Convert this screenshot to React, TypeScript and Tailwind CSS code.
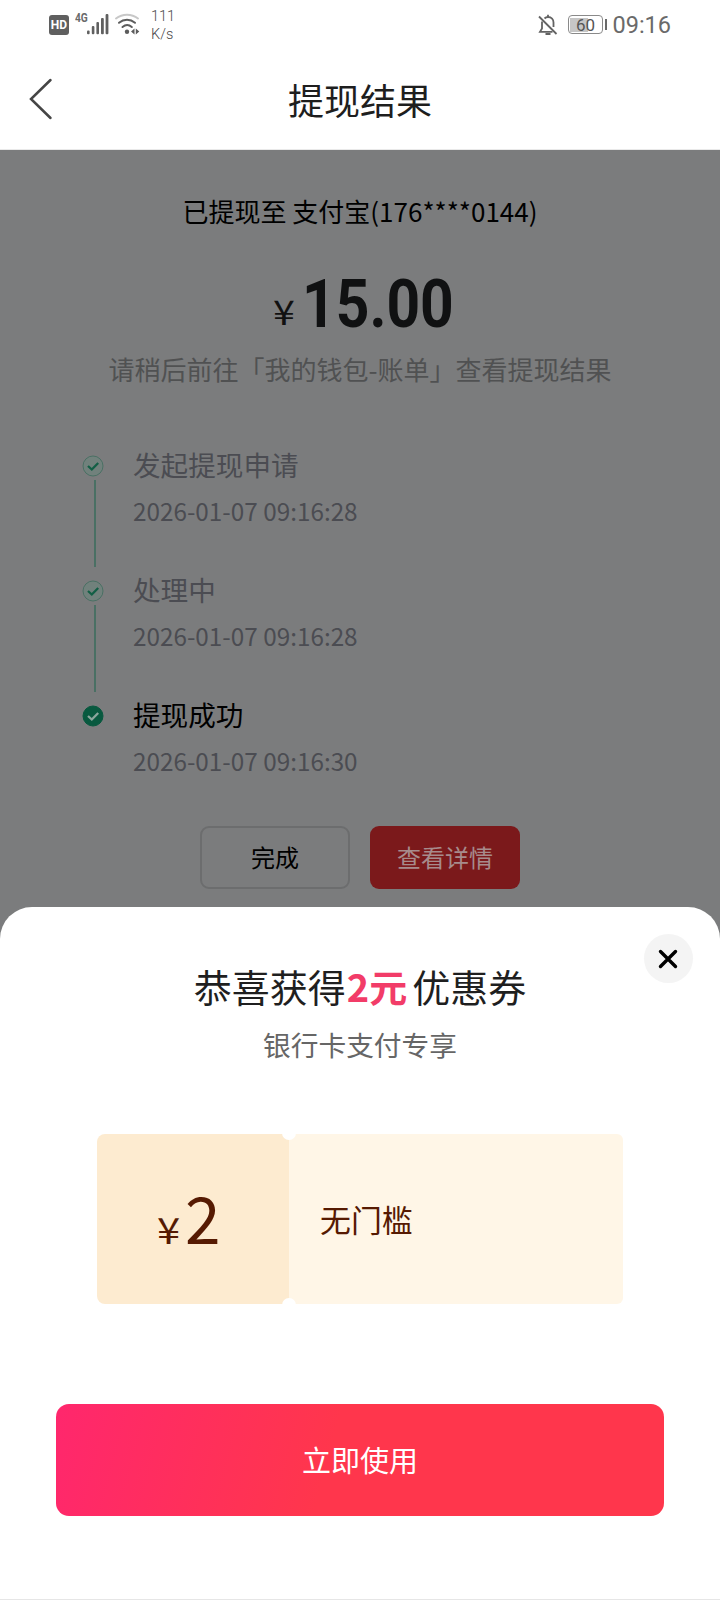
import React from 'react';

const steps = [
  { title: '发起提现申请', time: '2026-01-07 09:16:28', done: false },
  { title: '处理中', time: '2026-01-07 09:16:28', done: false },
  { title: '提现成功', time: '2026-01-07 09:16:30', done: true },
];

const StatusBar = () => (
  <div className="flex justify-between h-[50px] pl-[49px] pr-[49px] font-['Roboto',sans-serif] text-[#6a6a6a]">
    <div className="flex">
      <div className="mt-[15px] w-[20px] h-[20px] rounded-[3px] bg-[#5f5f5f] text-white text-[12px] leading-[20px] font-bold text-center">
        HD
      </div>
      <div className="ml-[6px] mt-[12px] w-[12px] origin-left scale-x-[0.850] text-[12px] leading-[13px] font-bold">4G</div>
      <svg className="mt-[13px]" width="22" height="22" viewBox="0 0 22 22" fill="#606060">
        <rect x="0" y="17.5" width="2.6" height="3.8" rx="1" />
        <rect x="4.8" y="13" width="2.6" height="8.3" rx="1" />
        <rect x="9.4" y="9" width="2.6" height="12.3" rx="1" />
        <rect x="14" y="5" width="2.8" height="16.3" rx="1" />
        <rect x="18.6" y="1" width="2.8" height="20.3" rx="1" />
      </svg>
      <svg className="ml-[5px] mt-[13px]" width="28" height="22" viewBox="0 0 28 22" fill="none" strokeWidth="2" strokeLinecap="round">
        <path d="M2 5.5C8.5 0.5 17.500 0.500 24 5.500" stroke="#c8c8c8" />
        <path d="M5 9.800C9.800 5.800 16.200 5.800 21 9.800" stroke="#5c5c5c" />
        <path d="M8.500 14C11.500 11.500 14.800 11.500 17.800 14" stroke="#5c5c5c" />
        <circle cx="13" cy="18.700" r="2.200" fill="#5c5c5c" />
        <path d="M20.500 15.500V21.500L17 18.500ZM21.800 15.500V21.500L25.300 18.500Z" fill="#5c5c5c" />
      </svg>
      <div className="ml-[9px] mt-[8px] text-[14.500px] leading-[18px] font-light text-[#4a4a4a]">
        <div>111</div>
        <div>K/s</div>
      </div>
    </div>
    <div className="flex">
      <svg className="mt-[14px]" width="20" height="22" viewBox="0 0 20 22" fill="none" stroke="#636363" strokeWidth="1.800">
        <path d="M1 2.500L18.500 20" />
        <path d="M4 7.500V14.500L2 17.800H14.500" />
        <path d="M6.500 4.500C7.500 3.500 8.800 3 10 3C13.500 3 15.500 5.500 15.500 8.500V13" />
        <path d="M10 3V0.800M7.500 20H12.500" />
      </svg>
      <div className="ml-[10px] mt-[15px] w-[35px] h-[19px] rounded-[4px] border-[1.500px] border-[#8a8a8a] p-[1.500px]">
        <div className="relative h-full w-full">
          <div className="h-full w-[18px] bg-[#c6c6c6]" />
          <div className="absolute inset-0 text-center text-[17px] leading-[14px] text-[#555]">60</div>
        </div>
      </div>
      <div className="ml-[2px] mt-[19px] w-[2.500px] h-[11px] bg-[#6a6a6a]" />
      <div className="ml-[5px] mt-[12px] text-[23.500px] leading-[26px]">09:16</div>
    </div>
  </div>
);

const StepIcon = ({ done }: { done: boolean }) => (
  <svg className="block shrink-0" width="22" height="22" viewBox="0 0 22 22" fill="none">
    <circle cx="11" cy="11" r="10" fill={done ? '#08593f' : '#71817c'} stroke={done ? '#08593f' : '#4a7064'} />
    <path
      d="M6 11L9.800 14.500L16.200 8"
      stroke={done ? '#8ba69d' : '#125f45'}
      strokeWidth="2.300"
    />
  </svg>
);

const ResultPage = () => (
  <main className="flex flex-col items-center h-[1450px] bg-[#7b7c7d] text-[#0b0b0c]">
    <div className="mt-[43px] text-[26px] leading-[36px] text-black whitespace-pre">已提现至 支付宝(176****0144)</div>
    <div className="mt-[37px] flex h-[72px] w-[174px] whitespace-nowrap">
      <span className="mt-[25px] w-[29px] shrink-0 origin-left scale-x-[1.160] text-[34px] leading-[40px] text-[#111]">¥</span>
      <span className="mt-px shrink-0 origin-left scale-x-[0.870] font-['Roboto',sans-serif] font-bold text-[67.500px] leading-[73px] text-[#101112]">15.00</span>
    </div>
    <div className="mt-[13px] text-[26px] leading-[36px] text-[#505152] whitespace-nowrap">
      请稍后前往「我的钱包-账单」查看提现结果
    </div>

    {/* Progress */}
    <div className="mt-[57px] w-[556px]">
      {steps.map((step, i) => (
        <div key={step.title} className="flex h-[125px]">
          <div className="mt-[10.500px] w-[51px]">
            <StepIcon done={step.done} />
            {i < steps.length - 1 && <div className="ml-[12px] mt-[3.500px] h-[87px] w-[2px] bg-[#4a7064]" />}
          </div>
          <div>
            <div className={`text-[27.600px] leading-[41px] ${step.done ? 'text-black' : 'text-[#4b4c52]'}`}>{step.title}</div>
            <div className="mt-[8px] text-[24.300px] leading-[36px] text-[#4b4c52]">{step.time}</div>
          </div>
        </div>
      ))}
    </div>

    <div className="mt-[7px] flex gap-[20px] text-[24px]">
      <button className="w-[150px] h-[63px] rounded-[9px] border-2 border-[#6c6d6e] pb-[2px] text-black">完成</button>
      <button className="w-[150px] h-[63px] rounded-[9px] bg-[#7b191b] pb-[2px] text-[#a78b8c]">查看详情</button>
    </div>
  </main>
);

const CouponSheet = () => (
  <section className="absolute inset-x-0 bottom-0 h-[693px] rounded-t-[32px] bg-white flex flex-col items-center border-b border-[#e6e6e6]">
    <button className="absolute right-[27px] top-[27px] w-[49px] h-[49px] rounded-full bg-[#f4f4f4] flex items-center justify-center">
      <svg className="mr-px" width="20" height="20" viewBox="0 0 20 20" stroke="#000" strokeWidth="3.400" strokeLinecap="round">
        <path d="M2.500 2.500L17.500 17.500M17.500 2.500L2.500 17.500" />
      </svg>
    </button>

    <h2 className="mt-[52px] text-[38px] leading-[54px] text-[#1f1f1f] whitespace-nowrap">
      恭喜获得<span className="ml-px mr-[5px] font-bold text-[#f23c68]">2元</span>优惠券
    </h2>
    <p className="mt-[11px] text-[27.700px] leading-[40px] text-[#666]">银行卡支付专享</p>

    {/* Coupon */}
    <div className="relative mt-[70px] flex w-[526px] h-[170px] text-[#561a02]">
      <div className="w-[192px] rounded-l-[8px] bg-[#fdebd0] flex items-baseline pl-[60px] pt-[37px]">
        <span className="w-[28px] origin-left scale-x-[1.160] text-[36px] leading-[90px]">¥</span>
        <span className="text-[64px] leading-[90px]">2</span>
      </div>
      <div className="flex-1 rounded-r-[6px] bg-[#fff6e7] flex items-center pl-[31px] text-[30.900px]">无门槛</div>
      <div className="absolute left-[185px] -top-[8px] w-[14px] h-[14px] rounded-full bg-white" />
      <div className="absolute left-[185px] -bottom-[8px] w-[14px] h-[14px] rounded-full bg-white" />
    </div>

    <button className="mt-[100px] w-[608px] h-[112px] rounded-[13px] bg-[linear-gradient(105deg,#ff276d_0%,#ff364c_45%,#ff364c_100%)] text-[29px] text-white">
      立即使用
    </button>
  </section>
);

const App = () => {
  return (
    <div className="relative w-[720px] h-[1600px] overflow-hidden bg-white font-['Noto_Sans_CJK_SC',sans-serif]">
      <StatusBar />
      <header className="relative flex h-[100px] items-center justify-center border-b border-[#e9e9e9]">
        <svg className="absolute left-[28px] top-[27px]" width="26" height="44" viewBox="0 0 26 44" fill="none" stroke="#454545" strokeWidth="2.500" strokeLinecap="round">
          <path d="M22.500 3L3 22L22.500 41" />
        </svg>
        <h1 className="mb-[2px] text-[36px] leading-[52px] text-[#1e1e1e]">提现结果</h1>
      </header>
      <ResultPage />
      <CouponSheet />
    </div>
  );
};

export default App;
